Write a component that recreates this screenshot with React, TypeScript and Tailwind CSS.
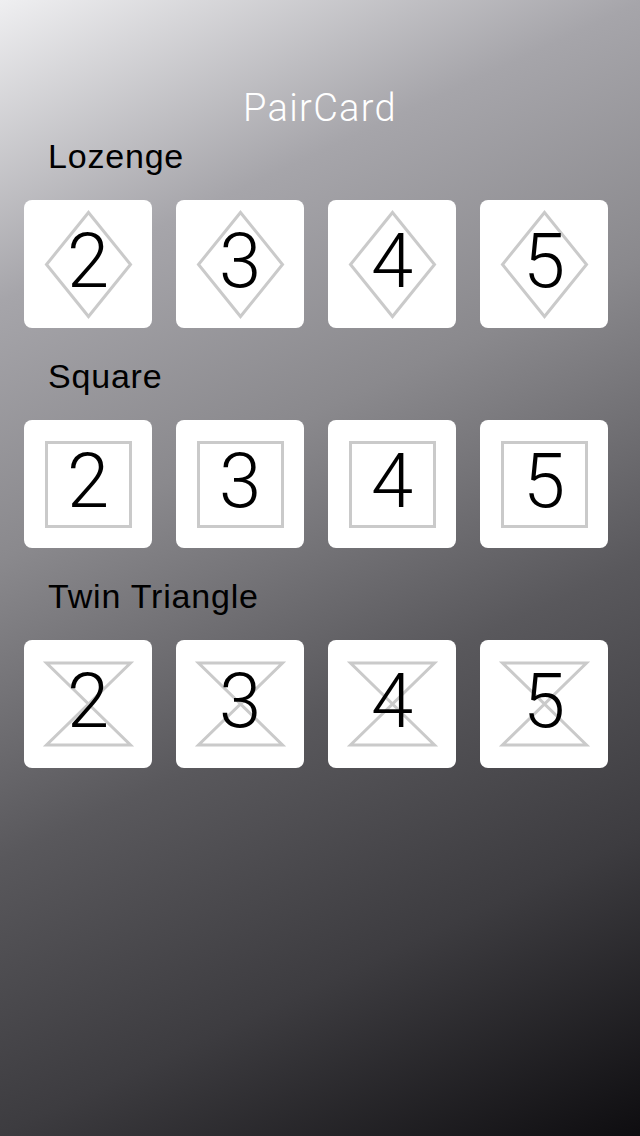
import React from "react";

type Shape = "lozenge" | "square" | "twin";

const sections: { label: string; shape: Shape }[] = [
  { label: "Lozenge", shape: "lozenge" },
  { label: "Square", shape: "square" },
  { label: "Twin Triangle", shape: "twin" },
];

const digits = ["2", "3", "4", "5"];

function ShapeSvg({ shape }: { shape: Shape }) {
  const stroke = "#cacaca";
  return (
    <svg
      className="absolute inset-0"
      width="128"
      height="128"
      viewBox="0 0 128 128"
      fill="none"
    >
      {shape === "lozenge" && (
        <polygon
          points="64.5,12.5 106.5,64.5 64.5,116.5 22.5,64.5"
          stroke={stroke}
          strokeWidth="3"
          strokeLinejoin="miter"
        />
      )}
      {shape === "square" && (
        <rect x="22.5" y="22.5" width="84" height="84" stroke={stroke} strokeWidth="3" />
      )}
      {shape === "twin" && (
        <polygon
          points="22.5,23 106.5,23 22.5,105 106.5,105"
          stroke={stroke}
          strokeWidth="3"
          strokeLinejoin="miter"
        />
      )}
    </svg>
  );
}

function Card({ digit, shape }: { digit: string; shape: Shape }) {
  return (
    <div className="relative w-[128px] h-[128px] bg-white rounded-lg flex items-center justify-center">
      <ShapeSvg shape={shape} />
      <span className="relative mb-[7px] text-[76px] leading-none text-black font-['Roboto',sans-serif] font-light">
        {digit}
      </span>
    </div>
  );
}

export default function App() {
  return (
    <div
      className="w-full h-[1136px] overflow-hidden bg-[linear-gradient(155deg,#efeff1_0%,#a6a5aa_21%,#8a898d_39%,#59585c_60%,#3d3c40_79%,#0e0d10_100%)] flex flex-col"
      style={{ fontFamily: '"Liberation Sans", Arial, sans-serif' }}
    >
      <h1 className="mt-[89px] text-center text-white text-[38px] leading-[38px] tracking-[1.3px] font-light font-['Roboto',sans-serif]">
        PairCard
      </h1>
      <div className="mt-[12px] flex flex-col gap-[31px]">
        {sections.map((s) => (
          <section key={s.label} className="flex flex-col">
            <div className="pl-[48px] text-[34px] leading-[34px] tracking-[0.8px] text-black">
              {s.label}
            </div>
            <div className="mt-[27px] px-[24px] flex gap-[24px]">
              {digits.map((d) => (
                <Card key={d} digit={d} shape={s.shape} />
              ))}
            </div>
          </section>
        ))}
      </div>
    </div>
  );
}
